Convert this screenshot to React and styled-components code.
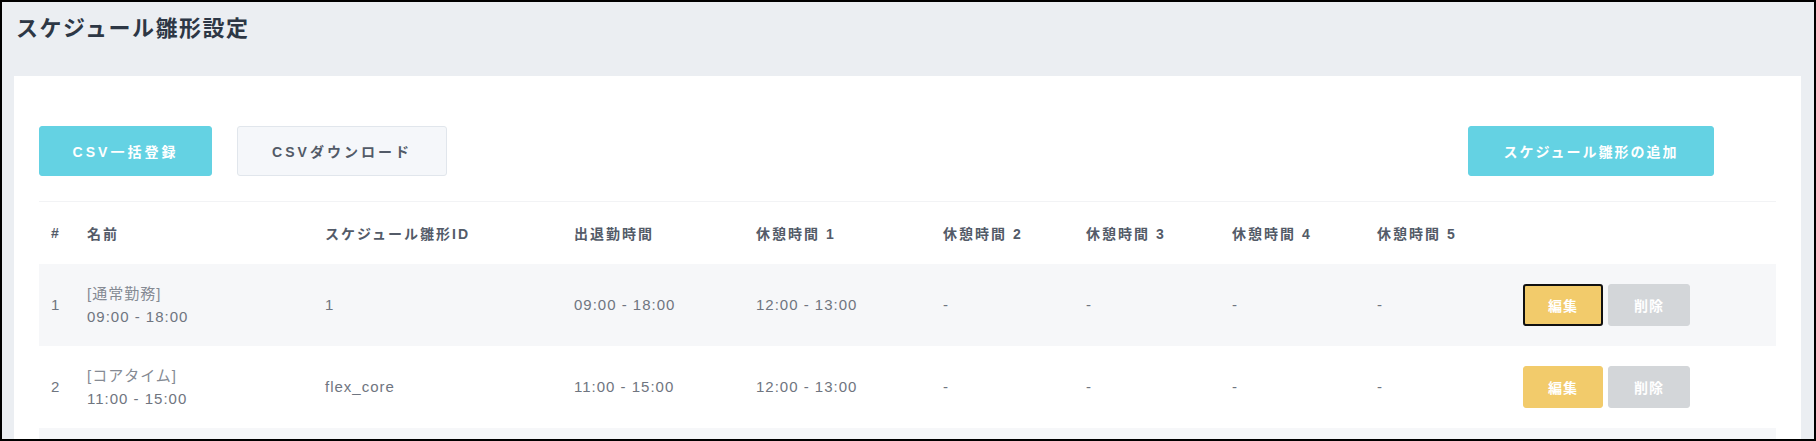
import React from 'react';
import styled, { createGlobalStyle } from 'styled-components';

const GlobalStyle = createGlobalStyle`
  html, body {
    margin: 0;
    padding: 0;
    background: #ffffff;
  }
  body {
    font-family: "Liberation Sans", "Noto Sans CJK JP", sans-serif;
  }
  * {
    box-sizing: border-box;
  }
`;

const Frame = styled.div`
  height: 441px;
  border: 2px solid #000000;
  background-color: #ebeef2;
  overflow: hidden;
`;

const PageHeader = styled.header`
  height: 74px;
  padding: 13px 14px 0;
`;

const PageTitle = styled.h1`
  margin: 0;
  font-size: 22px;
  line-height: 28px;
  font-weight: 600;
  letter-spacing: 1.5px;
  color: #2d3745;
`;

const Card = styled.section`
  margin: 0 13px 0 12px;
  padding: 50px 25px 0;
  background-color: #ffffff;
  height: 400px;
`;

const Toolbar = styled.div`
  display: flex;
  align-items: center;
  gap: 25px;
  padding-right: 62px;
  margin-bottom: 25px;
`;

const Spacer = styled.div`
  flex: 1;
`;

const ToolButton = styled.button`
  height: 50px;
  width: ${props => props.width}px;
  border-radius: 3px;
  font-family: "Liberation Sans", "Noto Sans CJK JP", sans-serif;
  font-size: 14px;
  font-weight: bold;
  letter-spacing: ${props => props.spacing || 2}px;
  cursor: pointer;
  border: 1px solid ${props => (props.variant === 'light' ? '#e1e6ec' : '#64d2e3')};
  background-color: ${props => (props.variant === 'light' ? '#f5f7fa' : '#64d2e3')};
  color: ${props => (props.variant === 'light' ? '#525a67' : '#ffffff')};
`;

const Table = styled.table`
  width: 100%;
  border-collapse: collapse;
  table-layout: fixed;
  border-top: 1px solid #f2f3f5;
`;

const Col = styled.col`
  width: ${props => props.width}px;
`;

const HeadCell = styled.th`
  height: 62px;
  padding: 0 12px;
  text-align: left;
  vertical-align: middle;
  font-size: 14px;
  font-weight: bold;
  letter-spacing: 2px;
  color: #535b68;
  white-space: nowrap;
`;

const Row = styled.tr`
  background-color: ${props => (props.striped ? '#f6f7f9' : '#ffffff')};
`;

const Cell = styled.td`
  height: 82px;
  padding: 0 12px;
  vertical-align: middle;
  font-size: 15px;
  letter-spacing: 1px;
  line-height: 23px;
  color: #6f7580;
  white-space: nowrap;
`;

const NameTag = styled.div`
  color: #858a93;
`;

const Actions = styled.div`
  display: flex;
  gap: 5px;
`;

const RowButton = styled.button`
  height: 42px;
  width: ${props => props.width}px;
  border-radius: 3px;
  font-family: "Liberation Sans", "Noto Sans CJK JP", sans-serif;
  font-size: 14px;
  font-weight: bold;
  letter-spacing: 1px;
  color: #ffffff;
  cursor: pointer;
  background-color: ${props => (props.kind === 'edit' ? '#f2cb6b' : '#d3d6d9')};
  border: ${props => (props.focused ? '2px solid #111111' : `1px solid ${props.kind === 'edit' ? '#f2cb6b' : '#d3d6d9'}`)};
`;

const columns = [36, 238, 249, 182, 187, 143, 146, 145, 146, 265];

const headers = ['#', '名前', 'スケジュール雛形ID', '出退勤時間', '休憩時間 1', '休憩時間 2', '休憩時間 3', '休憩時間 4', '休憩時間 5', ''];

const templates = [
  { no: 1, tag: '[通常勤務]', hours: '09:00 - 18:00', id: '1', work: '09:00 - 18:00', breaks: ['12:00 - 13:00', '-', '-', '-', '-'] },
  { no: 2, tag: '[コアタイム]', hours: '11:00 - 15:00', id: 'flex_core', work: '11:00 - 15:00', breaks: ['12:00 - 13:00', '-', '-', '-', '-'] },
  { no: 3, tag: '[短時間勤務]', hours: '10:00 - 16:00', id: 'short', work: '10:00 - 16:00', breaks: ['12:00 - 13:00', '-', '-', '-', '-'] },
];

function App() {
  return (
    <>
      <GlobalStyle />
      <Frame>
        <PageHeader>
          <PageTitle>スケジュール雛形設定</PageTitle>
        </PageHeader>
        <Card>
          <Toolbar>
            <ToolButton width={173} spacing={3}>CSV一括登録</ToolButton>
            <ToolButton width={210} spacing={3} variant="light">CSVダウンロード</ToolButton>
            <Spacer />
            <ToolButton width={246}>スケジュール雛形の追加</ToolButton>
          </Toolbar>
          <Table>
            <colgroup>
              {columns.map((w, i) => (
                <Col key={i} width={w} />
              ))}
            </colgroup>
            <thead>
              <tr>
                {headers.map((h, i) => (
                  <HeadCell key={i}>{h}</HeadCell>
                ))}
              </tr>
            </thead>
            <tbody>
              {templates.map((t, i) => (
                <Row key={t.no} striped={i % 2 === 0}>
                  <Cell>{t.no}</Cell>
                  <Cell>
                    <NameTag>{t.tag}</NameTag>
                    <div>{t.hours}</div>
                  </Cell>
                  <Cell>{t.id}</Cell>
                  <Cell>{t.work}</Cell>
                  {t.breaks.map((b, j) => (
                    <Cell key={j}>{b}</Cell>
                  ))}
                  <Cell>
                    <Actions>
                      <RowButton width={80} kind="edit" focused={i === 0}>編集</RowButton>
                      <RowButton width={82} kind="delete">削除</RowButton>
                    </Actions>
                  </Cell>
                </Row>
              ))}
            </tbody>
          </Table>
        </Card>
      </Frame>
    </>
  );
}

export default App;
